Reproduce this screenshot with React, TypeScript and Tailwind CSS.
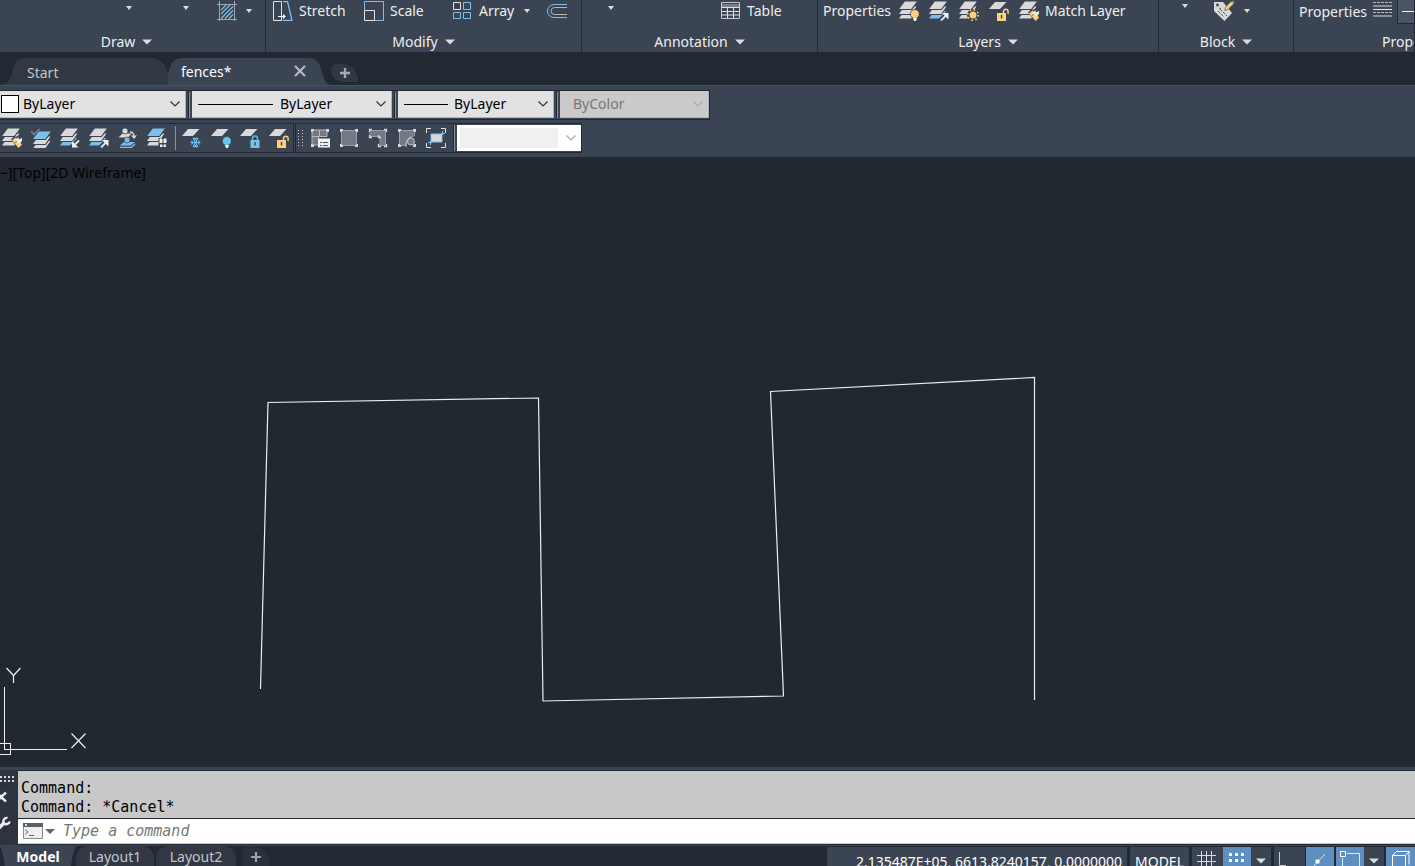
import type { ReactNode } from "react";

const PALE = "#d9d9d9";
const BLUE = "#7cbfef";
const GOLD = "#ffcf7a";
const PANEL = "#3b4453";

function Icon({ children, label }: { children: ReactNode; label?: string }) {
  return (
    <svg viewBox="0 0 20 20" className="size-5 shrink-0" fill="none" aria-label={label}>
      {children}
    </svg>
  );
}

function Caret({ big = false }: { big?: boolean }) {
  return big ? (
    <svg viewBox="0 0 10 6" className="h-[6px] w-[10px] shrink-0" fill="#dcdcdc">
      <path d="M0 .5h10L5 5.5z" />
    </svg>
  ) : (
    <svg viewBox="0 0 6 4" className="h-[4px] w-[6px] shrink-0" fill="#dcdcdc">
      <path d="M0 0h6L3 4z" />
    </svg>
  );
}

function Chevron({ color }: { color: string }) {
  return (
    <svg viewBox="0 0 10 6" className="pointer-events-none absolute top-[10px] right-[5px] h-[6px] w-[10px]" fill="none" stroke={color} strokeWidth="1.200">
      <path d="M.5.5 5 5 9.5.5" />
    </svg>
  );
}

function Sheets({ top = PALE, mid = PALE, low = PALE }: { top?: string; mid?: string; low?: string }) {
  return (
    <g stroke={PANEL} strokeWidth="1.200">
      <path d="M5 9.500h13.500l-6 8.500H-1z" fill={low} />
      <path d="M5 5h13.500l-6 8.500H-1z" fill={mid} />
      <path d="M5.500 0h13.500l-6.500 8.500H-1z" fill={top} />
    </g>
  );
}

const Brush = () => (
  <g>
    <path d="m9 11.500 3-3H20V20h-4z" fill={PANEL} />
    <path d="m10 12.500 3.500-3 2.300 2.500-3.600 3z" fill={GOLD} />
    <path d="m12.600 15.200 4.200-3.500 3.200 5-3.500 3.300z" fill={GOLD} />
    <path d="m13.500 11.500 3-2.500v2.500L20 10v3l-3 2.500z" fill="#f5f1e8" />
  </g>
);
const ArrowOut = () => (
  <g>
    <path d="m11 20 8-8" stroke={PANEL} strokeWidth="5" />
    <path d="m12 19.500 5.500-5.500" stroke="#e8e8e8" strokeWidth="1.800" />
    <path d="M13 12h6.500v6.500z" fill="#f0f0f0" />
  </g>
);
const ArrowIn = () => (
  <g>
    <path d="m11 20 8-8" stroke={PANEL} strokeWidth="5" />
    <path d="m14 17.500 5-5" stroke="#e8e8e8" strokeWidth="1.800" />
    <path d="M12 13v6.500h6.500z" fill="#f0f0f0" />
  </g>
);
const Bulb = ({ color }: { color: string }) => (
  <g>
    <circle cx="15.800" cy="13" r="4.500" fill={color} stroke={PANEL} strokeWidth=".8" />
    <path d="M14 17h4l-1 3h-2z" fill="#fff" />
  </g>
);
const Sun = () => (
  <g>
    <circle cx="14" cy="14" r="6" fill={PANEL} />
    <circle cx="14" cy="14" r="3.500" fill={GOLD} />
    <circle cx="14" cy="14" r="5.300" stroke={GOLD} strokeWidth="1.600" strokeDasharray="1.600 2.563" />
  </g>
);
const Sheet = () => <path d="M6 1h11.500L11 8H0z" fill={PALE} />;
const Lock = ({ open = false }: { open?: boolean }) => (
  <g>
    <path d={open ? "M14.500 13v-2.500a2.300 2.300 0 0 1 4.600 0v2.500" : "M12.500 13v-2.500a2.500 2.500 0 0 1 5 0V13"} stroke={open ? GOLD : "#62b4e0"} strokeWidth="1.500" />
    <path d={open ? "M8 12h9v8H8z" : "M10.500 12h9v8h-9z"} fill={open ? GOLD : "#75c4ec"} />
    <path d={open ? "M12.500 14v3.500" : "M15 14v3.500"} stroke="#3b4453" strokeWidth="1.400" />
  </g>
);
const Snow = () => (
  <g stroke="#68c3ef" strokeWidth="1.100">
    <path d="M8.500 14.500h10M11 10l5 9M16 10l-5 9" />
    <path d="m9.500 12.500 1.500 2-1.500 2M17.500 12.500l-1.500 2 1.500 2M12 9.500l1.500 2 1.500-2M12 19.500l1.500-2 1.500 2" />
  </g>
);
const Corners = () => (
  <g fill="#d5d5d5">
    <path d="M1 1h3v2H3v1H1zM16 1h3v3h-2V3h-1zM1 16h2v1h1v2H1zM17 16h2v3h-3v-2h1z" />
  </g>
);

const layerIcons: [string, ReactNode][] = [
  ["Layer off", <><Sheets /><Bulb color={GOLD} /></>],
  ["Make current", <><Sheets low={BLUE} /><ArrowOut /></>],
  ["Thaw all layers", <><Sheets /><Sun /></>],
  ["Unlock layer", <><Sheet /><Lock open /></>],
];

const layerTools: [string, ReactNode][] = [
  ["Match layer", <><Sheets /><Brush /></>],
  ["Set current layer", <><g transform="translate(2 3)"><Sheets top={BLUE} /></g><path d="m0 3 3 3.500L8.500 1" stroke="#738296" strokeWidth="1.600" /></>],
  ["Copy to layer", <><Sheets low={BLUE} /><ArrowIn /></>],
  ["Change layer", <><Sheets low={BLUE} /><ArrowOut /></>],
  ["Layer walk", <><path d="M4.500 5.500h9L10 9.500H.5z" fill={PALE} /><circle cx="7" cy="3" r="3" fill={PALE} stroke={PANEL} strokeWidth=".7" /><path d="M12 4q4 0 4 5" stroke={PALE} strokeWidth="1.300" /><path d="M13 7.500h6L16 11z" fill={PALE} /><path d="M6 14h11l-4.500 3.500H2z" fill={BLUE} /><circle cx="9" cy="12" r="3" fill={BLUE} stroke={PANEL} strokeWidth=".7" /><path d="M2 19.500h11l4-3.500" stroke={BLUE} strokeWidth="1.500" /></>],
  ["Layer isolate", <><Sheets top={BLUE} /><path d="M11.500 10H20v10h-8.500z" fill={PANEL} /><path d="M12.500 11q1.500-1.500 3 0v4h-3zM16.500 11q1.500-1.500 3 0v4h-3zM13 16.500h2.500V19H13zM16.500 16.500H19V19h-2.500z" fill="#eee" /></>],
];

const stateTools: [string, ReactNode][] = [
  ["Freeze layer", <><Sheet /><Snow /></>],
  ["Turn layer off", <><Sheet /><Bulb color="#69c4f1" /></>],
  ["Lock layer", <><Sheet /><Lock /></>],
  ["Unlock layer object", <><Sheet /><Lock open /></>],
];

const viewportTools: [string, ReactNode][] = [
  ["Viewports", <><path d="M2 2h7.500v6.500H2zM9.500 2H17v6.500H9.500zM2 8.500h6.500V17H2z" fill="#737985" stroke="#b7bac0" /><Corners /><path d="M8 10.500h12v9H8z" fill="#f2f2f2" /><path d="M10 14.500h2M13 14.500h5M10 17.500h2M13 17.500h5" stroke="#555" /></>],
  ["Single viewport", <><path d="M2.500 2.500h15v15h-15z" fill="#737985" stroke="#999ea7" /><Corners /></>],
  ["Polygonal viewport", <><path d="M2 2.500h15.500v15H12V8.500H2z" fill="#737985" stroke="#999ea7" /><path d="M4 1.500H1.500V4M16 1.500h2.500V4M18.500 16v2.500H16M13 18.500h-2.500V16M1.500 7v2.500H4M10.500 7v2.500H13" stroke="#d5d5d5" strokeWidth="1.300" /></>],
  ["Object viewport", <><path d="M2.500 2.500h15v5l-5 2-4 8h-6z" fill="#737985" stroke="#999ea7" /><circle cx="14" cy="13.500" r="3.500" fill="#737985" stroke="#c3c5ca" /><path d="M9 19c0-5 1-9 6-10" stroke="#c3c5ca" /><Corners /></>],
  ["Clip viewport", <><path d="M.5 5V.5H5M15 .5h4.500V5M.5 15v4.500H5M15 19.500h4.500V15" stroke="#e3e3e3" /><path d="M5 6h11v8H5z" fill={PALE} stroke={BLUE} /><path d="M2 14.500h4M4.500 13v4M15 5.500h4M16.500 3v4" stroke={BLUE} /></>],
];

function Panel({ title, width, children, shift = "justify-center" }: { title: string; width: string; children: ReactNode; shift?: string }) {
  return (
    <section className={`flex flex-col overflow-hidden border-r border-[#222933] ${width}`}>
      <div className="flex h-[31px] items-start">{children}</div>
      <button className={`flex h-[21px] w-full items-center gap-[7px] ${shift}`}>
        <span>{title}</span>
        <Caret big />
      </button>
    </section>
  );
}

const rowButton = "flex h-[22px] shrink-0 items-center gap-[6px]";

function Ribbon() {
  return (
    <header className="flex h-[52px] shrink-0 overflow-hidden bg-[#3b4453]">
      <Panel title="Draw" width="w-[266px] shrink-0" shift="justify-center pr-3">
        <button aria-label="Circle" className="ml-[126px] pt-[6px]"><Caret /></button>
        <button aria-label="Arc" className="ml-[51px] pt-[6px]"><Caret /></button>
        <button aria-label="Hatch" className={`${rowButton} ml-[28px]`}>
          <Icon>
            <path d="M0 3.500h20M0 18.500h20M2.500 0v20M17.500 0v20" stroke="#a2a6ae" />
            <path d="m4 9 5-5M4 13l9-9M4 17.500 16 5.500M8 17.500l8-8M12 17.500l4-4" stroke={BLUE} strokeWidth="1.200" />
          </Icon>
        </button>
        <button aria-label="Hatch options" className={`${rowButton} ml-[9px]`}><Caret /></button>
      </Panel>
      <Panel title="Modify" width="w-[316px] shrink-0">
        <button className={`${rowButton} ml-[7px] w-[91px]`}>
          <Icon>
            <path d="M.5.500h8v19h-8z" stroke="#e3e3e3" />
            <path d="M10 .5h4.500l4.500 19H9.500" stroke={BLUE} strokeWidth="1.300" />
            <path d="M5 15.500h6" stroke="#fff" />
            <path d="M10 13 13 15.500l-3 2.500z" fill="#fff" />
          </Icon>
          Stretch
        </button>
        <button className={`${rowButton} w-[89px]`}>
          <Icon>
            <path d="M.5 9V.500h19v19H11" stroke={BLUE} />
            <path d="M.5 9.500h10v10H.5z" stroke="#e3e3e3" />
          </Icon>
          Scale
        </button>
        <button className={`${rowButton} w-[70px] gap-[5px]`}>
          <Icon>
            <path d="M.5 1.500h7v7h-7z" stroke="#e3e3e3" />
            <path d="M10.500 1.500h7v7h-7zM.5 11.500h7v6h-7zM10.500 11.500h7v6h-7z" stroke={BLUE} />
          </Icon>
          Array
        </button>
        <button aria-label="Array options" className={`${rowButton} ml-px`}><Caret /></button>
        <button aria-label="Offset" className={`${rowButton} ml-[17px]`}>
          <Icon>
            <path d="M20 3.500H7a6.500 6.500 0 0 0 0 13h13" stroke={BLUE} />
            <path d="M20 6.500H7.500a3.500 3.500 0 0 0 0 7H20" stroke="#b5b5b5" />
          </Icon>
        </button>
      </Panel>
      <Panel title="Annotation" width="w-[236px] shrink-0">
        <button aria-label="Dimension" className="ml-[26px] pt-[6px]"><Caret /></button>
        <button className={`${rowButton} ml-[107px]`}>
          <Icon>
            <path d="M.5 1.500h18v16H.5z" stroke="#c9c9c9" />
            <path d="M1 3h17v3H1z" fill="#777e89" />
            <path d="M.5 6.500h18M.5 10.500h18M.5 14h18M6.500 6.500v11M12.500 6.500v11" stroke="#e0e0e0" />
          </Icon>
          Table
        </button>
      </Panel>
      <Panel title="Layers" width="w-[341px] shrink-0">
        <button className={`${rowButton} ml-[5px] w-[76px]`}>Properties</button>
        <div className="flex gap-[10px]">
          {layerIcons.map(([label, art]) => (
            <button key={label} aria-label={label} className={rowButton}><Icon>{art}</Icon></button>
          ))}
          <button className={rowButton}>
            <Icon><Sheets /><Brush /></Icon>
            Match Layer
          </button>
        </div>
      </Panel>
      <Panel title="Block" width="w-[135px] shrink-0">
        <button aria-label="Insert" className="ml-[23px] pt-[4px]"><Caret /></button>
        <button aria-label="Edit attributes" className={`${rowButton} ml-[26px]`}>
          <Icon>
            <path d="M0 1h9l9 11-7.500 8L0 10z" fill={PALE} />
            <path d="m6 8 7 7M4 10l6 6M5 7l2 1" stroke="#555d6a" strokeDasharray="3 1" />
            <circle cx="3.500" cy="4" r="1.400" fill={PANEL} />
            <path d="m10.500 9.500 1.500-4 5-5 3 2-6 6z" fill={GOLD} stroke={PANEL} strokeWidth=".6" />
            <path d="M17 0h3v3z" fill="#c98b58" />
          </Icon>
        </button>
        <button aria-label="Attribute options" className={`${rowButton} ml-[10px]`}><Caret /></button>
      </Panel>
      <Panel title="Properties" width="min-w-0 flex-1" shift="pl-[88px]">
        <button className={`${rowButton} ml-[5px] w-[74px] pt-[2px]`}>Properties</button>
        <button aria-label="Linetype" className={rowButton}>
          <Icon>
            <path d="M0 1.500h19M0 11.500h19" stroke="#b8bbc0" strokeDasharray="3 1" />
            <path d="M0 5h19M0 15h19" stroke="#a5a9b0" strokeWidth="1.500" />
            <path d="M0 8.500h19" stroke="#e5e5e5" />
          </Icon>
        </button>
        <button aria-label="Linetype list" className="ml-[4px] flex h-[24px] flex-1 items-center border-b border-l border-[#222933] bg-[#4b5465] pl-1">
          <span className="h-px w-full bg-white" />
        </button>
      </Panel>
    </header>
  );
}

function FileTabs() {
  return (
    <nav className="flex h-[33px] shrink-0 items-end bg-[#222933]">
      <button className="relative h-[28px] w-[168px] pt-[3px] pl-[27px] text-left text-[#c3c6cb]">
        <svg viewBox="0 0 170 28" preserveAspectRatio="none" className="absolute inset-0 h-full w-full" fill="#313844">
          <path d="M0 28c9-1 11-8 13-15C15 5 17 1 26 1h127c10 0 15 7 17 15v12z" />
        </svg>
        <span className="relative">Start</span>
      </button>
      <div className="relative flex h-[28px] w-[163px] items-center justify-between pr-[25px] pl-[13px]">
        <svg viewBox="0 0 163 28" preserveAspectRatio="none" className="absolute inset-0 h-full w-full" fill={PANEL}>
          <path d="M0 28V18C2 7 5 1 15 1h126c9 0 11 7 13 14 2 8 4 12 9 13z" />
        </svg>
        <button className="relative pt-[2px] text-white">fences*</button>
        <button aria-label="Close" className="relative">
          <svg viewBox="0 0 12 12" className="size-[12px]" stroke="#b5b8be" strokeWidth="2.200"><path d="m1 1 10 10M11 1 1 11" /></svg>
        </button>
      </div>
      <button aria-label="New drawing" className="mb-[3px] flex h-[18px] w-[27px] items-center justify-center rounded-tl-md rounded-tr-2xl rounded-bl-xl bg-[#313844]">
        <svg viewBox="0 0 10 10" className="size-[10px]" stroke="#a5a8ae" strokeWidth="2.400"><path d="M5 0v10M0 5h10" /></svg>
      </button>
    </nav>
  );
}

function Combo({ label, value, width, pad, children, disabled = false }: { label: string; value: string; width: string; pad: string; children?: ReactNode; disabled?: boolean }) {
  return (
    <div className={`relative flex h-[27px] items-center border-r border-b border-[#b0b3b8] ${disabled ? "bg-[#cacaca]" : "bg-[#e2e2e2]"} ${width}`}>
      {children}
      <select aria-label={label} disabled={disabled} className={`h-full w-full appearance-none ${pad} ${disabled ? "text-[#777]" : "text-black"}`}>
        <option>{value}</option>
      </select>
      <Chevron color={disabled ? "#aaaaaa" : "#333333"} />
    </div>
  );
}

const Divider = () => <span className="mx-[2px] h-[26px] w-[2px] shrink-0 border-l border-[#222933] bg-[#8c929c]" />;

function ToolGroup({ tools }: { tools: [string, ReactNode][] }) {
  return (
    <div className="flex gap-[9px]">
      {tools.map(([label, art]) => (
        <button key={label} aria-label={label}><Icon>{art}</Icon></button>
      ))}
    </div>
  );
}

function Toolbars() {
  return (
    <div className="flex h-[72px] shrink-0 flex-col items-start gap-[3px] border-t border-[#4a5261] bg-[#3b4453] pt-[4px]">
      <div className="flex h-[30px] items-center border-y border-r border-[#222933] pb-px">
        <Combo label="Color" value="ByLayer" width="w-[186px]" pad="pl-[23px]">
          <span className="absolute top-[4px] left-px size-[18px] border border-black bg-white" />
        </Combo>
        <Divider />
        <Combo label="Linetype" value="ByLayer" width="w-[200px]" pad="pl-[88px]">
          <span className="absolute top-[13px] left-[6px] h-px w-[75px] bg-black" />
        </Combo>
        <Divider />
        <Combo label="Lineweight" value="ByLayer" width="w-[156px]" pad="pl-[56px]">
          <span className="absolute top-[13px] left-[6px] h-px w-[44px] bg-black" />
        </Combo>
        <Divider />
        <Combo label="Plot style" value="ByColor" width="w-[149px]" pad="pl-[13px]" disabled />
      </div>
      <div className="flex h-[30px] items-center">
        <div className="flex h-[30px] items-center border-y border-r border-[#222933] pr-[4px] pl-[2px]">
          <ToolGroup tools={layerTools} />
          <span className="mr-[6px] ml-[8px] h-[24px] w-px bg-[#8c929c]" />
          <ToolGroup tools={stateTools} />
        </div>
        <div className="ml-[1px] flex h-[30px] items-center border border-[#222933] pl-[2px]">
          <svg viewBox="0 0 5 17" className="mr-[7px] h-[17px] w-[5px]" stroke="#c5c8cd" strokeDasharray="1 2">
            <path d="M.5 0v17M4.500 0v17" />
          </svg>
          <ToolGroup tools={viewportTools} />
          <span className="ml-[5px]" />
          <Divider />
          <div className="relative flex h-[26px] w-[124px] bg-white p-[3px]">
            <select aria-label="Viewport scale" className="h-full w-[98px] appearance-none bg-[#f0f0f0]">
              <option> </option>
            </select>
            <Chevron color="#aaaaaa" />
          </div>
        </div>
      </div>
    </div>
  );
}

function Canvas() {
  return (
    <main className="relative min-h-0 flex-1 overflow-hidden bg-[#222830]">
      <button className="absolute top-[6px] left-0 leading-5 text-black">−][Top][2D Wireframe]</button>
      <svg viewBox="0 157 1415 610" preserveAspectRatio="xMinYMin meet" className="h-full w-full" fill="none" stroke="#eeeeee" strokeWidth="1.200">
        <path d="M260.500 689 268 402.500 538.500 398 543 701 783.500 696 770.500 391.500 1034.500 377.500V700" />
        <g shapeRendering="crispEdges" strokeWidth="1">
          <path d="M4.500 687v62.500H67M-1 743.500h11.500v11H-1z" />
        </g>
        <path d="m6.500 668 7 7.500 7-7.500M13.500 675.500v7.500M71.500 733.500l14 14.500M85.500 733.500l-14 14.500" />
      </svg>
    </main>
  );
}

function CommandLine() {
  return (
    <section className="flex h-[78px] shrink-0 border-t-3 border-[#3b4453] bg-[#222933] font-['DejaVu_Sans_Mono',monospace] text-[15px] text-black">
      <div className="w-[18px] shrink-0 bg-[#2d3440]">
        <svg viewBox="0 0 18 70" className="h-[70px] w-[18px]" fill="none">
          <path d="M0 7h14M0 11h14" stroke="#d9d9d9" strokeWidth="2" strokeDasharray="2 2" />
          <path d="M6 22.500 1 27l5 4.500M-3 22.500 1 27l-4 4.500" stroke="#eeeeee" strokeWidth="2.400" />
          <path d="m-1 58 5-5" stroke="#eeeeee" strokeWidth="3.400" />
          <path d="M7.500 48A3.500 3.500 0 0 0 4 53.500 3.800 3.800 0 0 0 9.800 51.500" stroke="#eeeeee" strokeWidth="2.400" />
        </svg>
      </div>
      <div className="flex min-w-0 flex-1 flex-col">
        <div className="mt-px h-[47px] bg-[#c8c8c8] pt-[8px] pl-[3px] leading-[19px]">
          <p>Command:</p>
          <p>Command: *Cancel*</p>
        </div>
        <label className="mt-px flex h-[25px] items-center border-b border-[#c8c8c8] bg-white pl-[5px]">
          <svg viewBox="0 0 32 16" className="mr-[8px] h-[16px] w-[32px] shrink-0" fill="none">
            <path d="M.5.5h19v15H.5z" fill="#eeeeee" stroke="#8a8a8a" />
            <path d="M0 0h20v4H0z" fill="#5c6068" />
            <path d="M2 1h2v2H2z" fill="#ddd" />
            <path d="m2 6.500 3 2.500-3 2.500M6 12.500h5" stroke="#666" />
            <path d="M22 6h10l-5 5z" fill="#666" />
          </svg>
          <input aria-label="Command" placeholder="Type a command" className="h-full min-w-0 flex-1 bg-transparent italic outline-none placeholder:text-[#777]" />
        </label>
      </div>
    </section>
  );
}

const stateCell = "flex h-[24px] shrink-0 items-start";

function StatusBar() {
  return (
    <footer className="flex h-[21px] shrink-0 justify-between overflow-hidden border-t border-[#3b4453] bg-[#222933]">
      <nav className="flex items-start leading-[22px] text-[#c3c6cb]">
        <button className="relative h-[22px] w-[76px] font-bold text-white">
          <svg viewBox="0 0 76 22" preserveAspectRatio="none" className="absolute inset-0 h-full w-full" fill={PANEL}>
            <path d="M0 0h76c-2 4-4 9-5 22H5C4 12 2 4 0 0z" />
          </svg>
          <span className="relative">Model</span>
        </button>
        <button className="h-[22px] w-[78px] rounded-t-xl bg-[#313844]">Layout1</button>
        <button className="ml-[2px] h-[22px] w-[80px] rounded-t-xl bg-[#313844]">Layout2</button>
        <button aria-label="New layout" className="ml-[6px] flex h-[22px] w-[27px] items-center justify-center rounded-tl-md rounded-tr-2xl bg-[#2a313c]">
          <svg viewBox="0 0 10 10" className="size-[10px]" stroke="#9da1a8" strokeWidth="2.200"><path d="M5 0v10M0 5h10" /></svg>
        </button>
      </nav>
      <div className="flex items-start pt-px leading-[20px] text-white">
        <button className={`${stateCell} w-[300px] justify-end bg-[#3b4453] pt-[5px] pr-[5px] whitespace-nowrap`}>2.135487E+05, 6613.8240157, 0.0000000</button>
        <button className={`${stateCell} ml-[3px] w-[59px] justify-center bg-[#3b4453] pt-[5px]`}>MODEL</button>
        <button aria-label="Grid" className={`${stateCell} ml-[3px] w-[31px] bg-[#3b4453] pl-[5px]`}>
          <svg viewBox="0 0 20 24" className="h-[24px] w-[20px]" stroke="#dddddd"><path d="M4.500 4v20M9.500 4v20M14.500 4v20M0 8.500h19M0 14.500h19" /></svg>
        </button>
        <button aria-label="Snap" className={`${stateCell} w-[28px] justify-center bg-[#5f8fc0]`}>
          <svg viewBox="0 0 16 24" className="h-[24px] w-[16px]" fill="#fff"><path d="M0 6h3v3H0zM6 6h3v3H6zM12 6h3v3h-3zM0 12h3v3H0zM6 12h3v3H6zM12 12h3v3h-3z" /></svg>
        </button>
        <button aria-label="Snap options" className={`${stateCell} w-[20px] justify-center bg-[#3b4453] pt-[11px]`}><Caret big /></button>
        <button aria-label="Ortho" className={`${stateCell} ml-[3px] w-[31px] bg-[#3b4453] pl-[5px]`}>
          <svg viewBox="0 0 20 24" className="h-[24px] w-[20px]" fill="none" stroke="#cccccc"><path d="M.5 5v13.500H7" /></svg>
        </button>
        <button aria-label="Polar tracking" className={`${stateCell} ml-px w-[28px] justify-center bg-[#5f8fc0]`}>
          <svg viewBox="0 0 20 24" className="h-[24px] w-[20px]" stroke="#bff0ff"><path d="M2 21 15 7" /><path d="M6 13h3v3H6z" fill="#fff" stroke="#fff" /></svg>
        </button>
        <button aria-label="Object snap" className={`${stateCell} ml-[2px] w-[28px] justify-center bg-[#5f8fc0]`}>
          <svg viewBox="0 0 20 24" className="h-[24px] w-[20px]" fill="none" stroke="#c9f5ff"><path d="M.5 4.500h5v5h-5z" stroke="#fff" /><path d="M7 6.500h12.500V24M2.500 11v13" /></svg>
        </button>
        <button aria-label="Object snap options" className={`${stateCell} w-[20px] justify-center bg-[#3b4453] pt-[11px]`}><Caret big /></button>
        <button aria-label="3D object snap" className={`${stateCell} ml-[2px] w-[29px] justify-center bg-[#5f8fc0]`}>
          <svg viewBox="0 0 20 24" className="h-[24px] w-[20px]" fill="none" stroke="#ffffff"><path d="M1.500 24V8.500h13V24M1.500 8.500l4-4h12.500v13M14.500 8.500l4-4" /></svg>
        </button>
      </div>
    </footer>
  );
}

export default function App() {
  return (
    <div className="flex h-screen flex-col overflow-hidden bg-[#222830] font-['Noto_Sans',sans-serif] text-[14px] leading-[20px] text-[#eeeeee]">
      <Ribbon />
      <FileTabs />
      <Toolbars />
      <Canvas />
      <CommandLine />
      <StatusBar />
    </div>
  );
}
